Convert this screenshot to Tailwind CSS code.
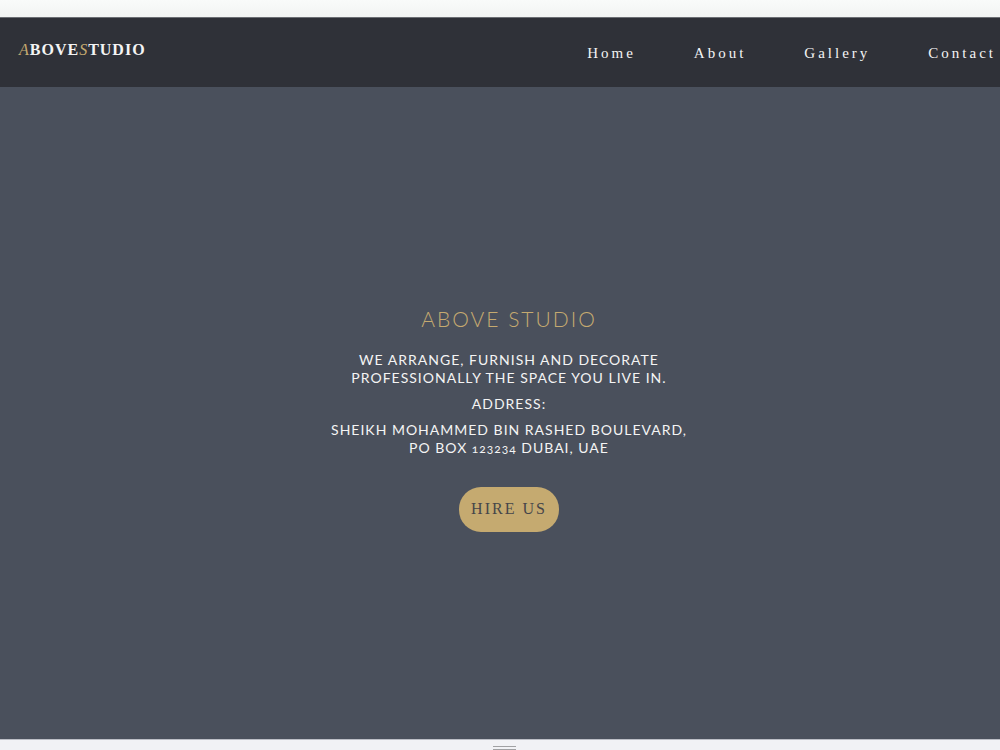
<!DOCTYPE html>
<html lang="en">
<head>
    <meta charset="UTF-8">
    <meta name="viewport" content="width=device-width, initial-scale=1.0">
    <title>Above Studio</title>
    <script src="https://cdn.jsdelivr.net/npm/@tailwindcss/browser@4"></script>
</head>
<body class="min-h-screen flex flex-col bg-[#4a505c] overflow-x-hidden">
    <div class="h-[17px] bg-linear-to-b from-[#f9fbfa] to-[#f2f4f3]"></div>

    <header class="h-[70px] flex items-center justify-between pl-[19px] pr-1 bg-[#2f3138] border-t border-[#6c6f74] font-['Liberation_Serif',serif] text-[#f4f4f4]">
        <a href="#" class="pb-1.5 text-base leading-5 font-bold tracking-[1px]"><span class="italic font-normal text-[#c5aa70]">A</span>BOVE<span class="italic font-normal text-[#c5aa70]">S</span>TUDIO</a>
        <nav class="flex gap-[58px] pt-0.5 text-[15px] tracking-[3px]">
            <a href="#home">Home</a>
            <a href="#about">About</a>
            <a href="#gallery">Gallery</a>
            <a href="#contact">Contact</a>
        </nav>
    </header>

    <main class="flex-1 flex flex-col items-center justify-center pl-[18px] pt-2.5 text-center font-[Lato,sans-serif] text-[#f4f4f4] uppercase">
        <h1 class="mb-[18px] text-[21px] leading-7 font-light tracking-[2px] text-[#c5aa70]">Above Studio</h1>
        <div class="space-y-2 text-sm leading-[18px] tracking-[1px]">
            <p>We arrange, furnish and decorate<br>professionally the space you live in.</p>
            <p>Address:</p>
            <p>Sheikh Mohammed Bin Rashed Boulevard,<br>PO Box <span class="oldstyle-nums text-xs">123234</span> Dubai, UAE</p>
        </div>
        <button type="button" class="mt-[30px] h-[45px] px-3 rounded-[22px] bg-[#c5aa70] font-['Liberation_Serif',serif] text-base tracking-[2px] text-[#45464a] uppercase">Hire us</button>
    </main>

    <!-- drag handle strip -->
    <div class="h-[11px] flex justify-center pt-[6px] pl-2 bg-[#f1f2f5] border-t border-[#bcbec6]">
        <div class="w-[23px] h-1 border-y border-[#a0a1a3]"></div>
    </div>
</body>
</html>
